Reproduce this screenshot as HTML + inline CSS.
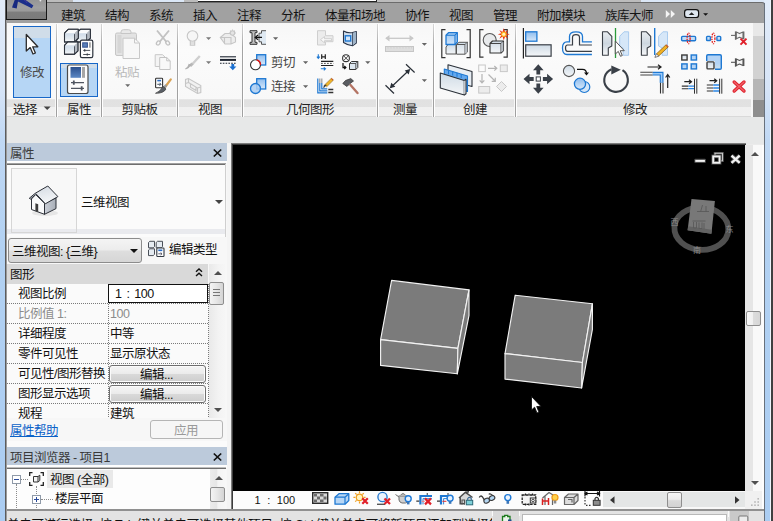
<!DOCTYPE html>
<html lang="zh-CN">
<head>
<meta charset="utf-8">
<title>Revit</title>
<style>
html,body{margin:0;padding:0;}
body{width:773px;height:521px;overflow:hidden;position:relative;background:#ebebeb;
  font-family:"Liberation Sans","Noto Sans CJK SC",sans-serif;font-size:12.5px;letter-spacing:-0.5px;color:#1a1a1a;}
.a{position:absolute;}
.t{position:absolute;white-space:nowrap;line-height:16px;height:16px;margin-top:2px;}
svg{position:absolute;overflow:visible;}
/* window frame */
#lb{left:0;top:0;width:5px;height:521px;background:linear-gradient(#e2ecf9 0,#d6e4f7 90px,#c0d8f4 140px,#b2d1f2 250px,#abcdf2 521px);}
#ll{left:5px;top:0;width:1px;height:521px;background:#5c5c5c;}
#rb{left:766px;top:0;width:7px;height:521px;background:linear-gradient(90deg,#c4daf4,#b7d0ee 50%,#cadef6);}
#rl{left:764px;top:0;width:2px;height:521px;background:#8e8e8e;}
/* tab bar */
#tabbar{left:6px;top:0;width:758px;height:23px;background:#a1a1a1;}
.tab{position:absolute;top:8px;line-height:16px;color:#141414;white-space:nowrap;}
/* ribbon */
#ribbon{left:6px;top:23px;width:758px;height:94px;background:linear-gradient(#f7f7f7,#fbfbfb 30%,#f7f7f7);}
.plabel{position:absolute;top:99px;height:18px;background:linear-gradient(#ececec 0,#e1e1e1 1px,#e2e2e2 8.500px,#f0f0f0 8.500px,#f1f1f1 17px,#d9d9d9 17px);}
.pl{position:absolute;top:102px;line-height:16px;text-align:center;color:#222;white-space:nowrap;}
.sep{position:absolute;top:24px;width:1px;height:93px;background:linear-gradient(#d8d8d8,#a4a4a4 25%,#a0a0a0);}
.sepw{position:absolute;top:24px;width:1px;height:93px;background:#fff;}
/* palettes */
.btn{box-sizing:border-box;border:1px solid #6f6f6f;border-radius:3px;background:linear-gradient(#f5f5f5,#ebebeb 48%,#d9d9d9 52%,#cdcdcd);box-shadow:inset 0 0 0 1px #fafafa;}
.ptitle{position:absolute;left:6px;width:221px;background:#bccadb;color:#1e1e1e;}
</style>
</head>
<body>
<!-- frame -->
<div class="a" id="lb"></div><div class="a" id="ll"></div>
<div class="a" style="left:764px;top:0;width:9px;height:521px;background:linear-gradient(#e2ecf9 0,#d6e4f7 90px,#c0d8f4 140px,#b2d1f2 250px,#abcdf2 521px)"></div>
<div class="a" style="left:764px;top:3px;width:1px;height:518px;background:#68717c"></div>
<div class="a" style="left:770px;top:0;width:1px;height:521px;background:#eef4fb"></div>
<div class="a" style="left:771px;top:0;width:2px;height:521px;background:#404040"></div>

<!-- tab bar -->
<div class="a" style="left:6px;top:0;width:758px;height:3px;background:#dbe7f6"></div>
<div class="a" style="left:47px;top:0;width:26px;height:2px;background:#bcbcbc"></div>
<div class="a" style="left:184px;top:0;width:14px;height:2px;background:#bcbcbc"></div>
<div class="a" style="left:198px;top:0;width:179px;height:2px;background:#fdfdfd;border-bottom:1px solid #222;border-right:1px solid #222;box-sizing:border-box"></div>
<div class="a" style="left:377px;top:0;width:264px;height:2px;background:#bcbcbc"></div>
<div class="a" id="tabbar" style="top:2px;height:21px;width:759px;box-sizing:border-box;border-top:1px solid #6c6c6c;border-right:1px solid #68717c;border-top-right-radius:3px"></div>
<div class="a" id="appbtn" style="left:6px;top:0;width:41px;height:20px;background:linear-gradient(#969696,#a0a0a0 40%,#9a9a9a 58%,#7e7e7e 64%,#7a7a7a);border:1px solid #161616;border-top:none;box-sizing:border-box;overflow:hidden"><svg style="left:0;top:0" width="40" height="19" viewBox="0 0 40 19"><path d="M7.700 0 H11.200 L9.700 8.500 L5 7.400Z" fill="#182a80"/><path d="M11.200 0 H18.600 L26.400 5.400 L24.800 8.200 L10.900 1.600Z" fill="#1b2f8a"/><path d="M17 0 q2.500 1 3 3" stroke="#4a3aa0" stroke-width="0.800" fill="none"/><circle cx="33.400" cy="0.500" r="0.900" fill="#e8e8e8"/></svg></div>
<svg style="left:0;top:0" width="773" height="24" viewBox="0 0 773 24">
<path d="M665.800 10 v8 l4.200 -4z M670.800 10 v8 l4.200 -4z" fill="#f4f4f4"/>
<rect x="684.600" y="9.700" width="14" height="7.800" rx="2.600" fill="#dfe7f0" stroke="#111" stroke-width="1.200"/>
<path d="M688.800 15 h5.600 l-2.800 -2.800z" fill="#222"/>
<path d="M703.100 13.200 h5 l-2.500 2.600z" fill="#111"/>
</svg>
<span class="tab" style="left:61px">建筑</span>
<span class="tab" style="left:105px">结构</span>
<span class="tab" style="left:149px">系统</span>
<span class="tab" style="left:193px">插入</span>
<span class="tab" style="left:237px">注释</span>
<span class="tab" style="left:281px">分析</span>
<span class="tab" style="left:325px">体量和场地</span>
<span class="tab" style="left:405px">协作</span>
<span class="tab" style="left:449px">视图</span>
<span class="tab" style="left:493px">管理</span>
<span class="tab" style="left:537px">附加模块</span>
<span class="tab" style="left:605px">族库大师</span>

<!-- ribbon -->
<div class="a" id="ribbon"></div>
<div class="plabel" style="left:7px;width:48px"></div>
<span class="pl" style="left:13px">选择</span>
<div class="sep" style="left:56px"></div><div class="sepw" style="left:57px"></div>
<div class="plabel" style="left:58px;width:42px"></div>
<span class="pl" style="left:67px">属性</span>
<div class="sep" style="left:101px"></div><div class="sepw" style="left:102px"></div>
<div class="plabel" style="left:103px;width:73px"></div>
<span class="pl" style="left:121.5px">剪贴板</span>
<div class="sep" style="left:177px"></div><div class="sepw" style="left:178px"></div>
<div class="plabel" style="left:179px;width:62px"></div>
<span class="pl" style="left:198px">视图</span>
<div class="sep" style="left:242px"></div><div class="sepw" style="left:243px"></div>
<div class="plabel" style="left:244px;width:132px"></div>
<span class="pl" style="left:286px">几何图形</span>
<div class="sep" style="left:377px"></div><div class="sepw" style="left:378px"></div>
<div class="plabel" style="left:379px;width:53px"></div>
<span class="pl" style="left:393px">测量</span>
<div class="sep" style="left:433px"></div><div class="sepw" style="left:434px"></div>
<div class="plabel" style="left:435px;width:79px"></div>
<span class="pl" style="left:463px">创建</span>
<div class="sep" style="left:515px"></div><div class="sepw" style="left:516px"></div>
<div class="plabel" style="left:517px;width:234px"></div>
<span class="pl" style="left:623px">修改</span>

<!-- select / properties panel -->
<div class="a" style="left:13px;top:26px;width:38px;height:72px;box-sizing:border-box;border:1px solid #1767c8;background:linear-gradient(#d0dde9,#d0dde9 11px,#b6d6f5 11px,#b6d6f5)"></div>
<span class="t" style="left:20px;top:63px;color:#4a4a4a">修改</span>
<div class="a" style="left:60px;top:63px;width:38px;height:34px;box-sizing:border-box;border:1px solid #1767c8;background:linear-gradient(#d0dde9,#d0dde9 4px,#b6d6f5 4px,#b6d6f5)"></div>
<svg style="left:0;top:0" width="773" height="130" viewBox="0 0 773 130">
<!-- arrow cursor -->
<path d="M26.300 34.500 V51 L30.200 47.600 L33 54 L35.400 53 L32.700 46.800 H37.800 Z" fill="#fff" stroke="#2c2c2c" stroke-width="1.300" stroke-linejoin="round"/>
<!-- select dropdown arrow -->
<path d="M43.700 106.500 h7 l-3.500 3.500z" fill="#444"/>
<!-- type properties -->
<defs><linearGradient id="gtp" x1="0" y1="0" x2="0" y2="1"><stop offset="0" stop-color="#fafbfc"/><stop offset="0.400" stop-color="#d3deea"/><stop offset="0.750" stop-color="#e3eaf0"/><stop offset="1" stop-color="#fbfbfc"/></linearGradient></defs>
<g stroke="#2c323c" stroke-width="1.050" stroke-linejoin="round">
<path d="M76.6 33.1 L80.39999999999999 29.3 H90.39999999999999 V38.10000000000001 L86.6 41.900000000000006 H76.6Z" fill="url(#gtp)"/><path d="M86.6 33.1 L90.39999999999999 29.3 V38.10000000000001 L86.6 41.900000000000006Z" fill="#b4bac2" stroke="none"/><path d="M77.1 32.9 L80.39999999999999 29.8 H89.89999999999999 L86.6 32.9Z" fill="#fafbfc" stroke="none"/><path d="M86.6 34.1 V41.900000000000006" fill="none" stroke-width="0.800"/><path d="M76.6 33.1 L80.39999999999999 29.3 H90.39999999999999 V38.10000000000001 L86.6 41.900000000000006 H76.6Z" fill="none"/><path d="M64.5 33.1 L68.3 29.3 H78.3 V38.10000000000001 L74.5 41.900000000000006 H64.5Z" fill="url(#gtp)"/><path d="M74.5 33.1 L78.3 29.3 V38.10000000000001 L74.5 41.900000000000006Z" fill="#b4bac2" stroke="none"/><path d="M65.0 32.9 L68.3 29.8 H77.8 L74.5 32.9Z" fill="#fafbfc" stroke="none"/><path d="M74.5 34.1 V41.900000000000006" fill="none" stroke-width="0.800"/><path d="M64.5 33.1 L68.3 29.3 H78.3 V38.10000000000001 L74.5 41.900000000000006 H64.5Z" fill="none"/><path d="M64.5 45.3 L67.9 41.9 H77.9 V50.8 L74.5 54.199999999999996 H64.5Z" fill="url(#gtp)"/><path d="M74.5 45.3 L77.9 41.9 V50.8 L74.5 54.199999999999996Z" fill="#b4bac2" stroke="none"/><path d="M65.0 45.099999999999994 L67.9 42.4 H77.4 L74.5 45.099999999999994Z" fill="#fafbfc" stroke="none"/><path d="M74.5 46.3 V54.199999999999996" fill="none" stroke-width="0.800"/><path d="M64.5 45.3 L67.9 41.9 H77.9 V50.8 L74.5 54.199999999999996 H64.5Z" fill="none"/>
</g>
<rect x="80.400" y="40.200" width="12.400" height="17.500" rx="1.600" fill="#fdfdfd" stroke="#2c323c" stroke-width="1.200"/>
<rect x="82.200" y="42.300" width="5.700" height="5.400" fill="#2c4c8c"/>
<rect x="83.200" y="43.300" width="3.700" height="3.400" fill="#5a7fb8"/>
<rect x="89" y="42.300" width="1.800" height="5.400" fill="#a4a4a4"/>
<path d="M83.200 50.400 h7 M83.200 54.500 h7" stroke="#3a4048" stroke-width="0.900"/>
<path d="M84.700 49.300 v2.200 M87.300 53.400 v2.200" stroke="#3a4048" stroke-width="1.300"/>
<!-- properties -->
<rect x="67.500" y="65" width="20.500" height="28.500" rx="2" fill="#fcfcfc" stroke="#4a4a4a" stroke-width="1.200"/>
<rect x="70.500" y="67" width="10.500" height="10.800" fill="url(#gblue)"/>
<rect x="82" y="67" width="3" height="10.800" fill="#a6a6a6"/>
<path d="M71 82.600 h13 M71 88.300 h13" stroke="#4f5560" stroke-width="1.200"/>
<path d="M73.800 80.500 v4.200 M81.700 86.200 v4.200" stroke="#4f5560" stroke-width="1.800"/>
<defs><linearGradient id="gblue" x1="0" y1="0" x2="0" y2="1"><stop offset="0" stop-color="#2b4f8c"/><stop offset="1" stop-color="#5d88c4"/></linearGradient></defs>
</svg>

<!-- clipboard panel -->
<span class="t" style="left:115px;top:63px;color:#b9b9b9">粘贴</span>
<svg style="left:0;top:0" width="773" height="130" viewBox="0 0 773 130">
<!-- paste (disabled) -->
<rect x="115.500" y="33" width="21" height="22.500" rx="1.500" fill="#e3e3e3" stroke="#c6c6c6" stroke-width="1"/>
<path d="M121 33.500 v-1.500 q0 -2.300 2.500 -2.300 h5 q2.500 0 2.500 2.300 v1.500z" fill="#e9e9e9" stroke="#c6c6c6" stroke-width="1"/>
<rect x="117.500" y="35" width="4" height="18" fill="#d6d6d6"/>
<path d="M123 38.200 H134.500 L139.500 43 V58.500 H123Z" fill="#f7f7f7" stroke="#c8c8c8" stroke-width="1" stroke-linejoin="round"/>
<path d="M134.500 38.200 V43 H139.500" fill="none" stroke="#c8c8c8" stroke-width="1"/>
<path d="M125.200 84.300 h5 l-2.500 2.600z" fill="#6a6a6a"/>
<!-- cut (disabled) -->
<g fill="none" stroke="#c2c2c2" stroke-width="1.300">
<path d="M157 30.500 L166.500 42 M169 30.500 L159.500 42" stroke-width="1.900"/>
<ellipse cx="158.300" cy="43" rx="1.700" ry="2.200" transform="rotate(35 158.300 43)"/>
<ellipse cx="167.700" cy="43" rx="1.700" ry="2.200" transform="rotate(-35 167.700 43)"/>
</g>
<!-- copy (disabled) -->
<path d="M155.200 54.700 H162.500 L165 57 V66.500 H155.200Z" fill="#f4f4f4" stroke="#c8c8c8" stroke-width="1"/>
<path d="M159.700 57.500 H166.700 L170.200 60.800 V69.500 H159.700Z" fill="#f8f8f8" stroke="#c4c4c4" stroke-width="1" stroke-linejoin="round"/>
<path d="M166.700 57.500 V60.800 H170.200" fill="none" stroke="#c4c4c4" stroke-width="1"/>
<!-- match type -->
<rect x="155.600" y="78.300" width="7" height="9.500" rx="0.800" fill="#fff" stroke="#333" stroke-width="1.100"/>
<rect x="157.300" y="79.800" width="3.800" height="1.600" fill="#2f6fc4"/>
<path d="M157.300 84.300 h3.500 M159.500 82.800 l1.500 1.500 l-1.500 1.500" fill="none" stroke="#345" stroke-width="0.900"/>
<path d="M170.800 79.300 L165.500 86.500" stroke="#d9a254" stroke-width="2.200" stroke-linecap="round"/>
<path d="M166.300 85 L164 88" stroke="#9a9a9a" stroke-width="2.600"/>
<path d="M163 86.300 L166 89 Q163.500 93.500 155.500 93.300 Q160.500 91.500 163 86.300Z" fill="#5a5f66" stroke="#3c3c3c" stroke-width="0.700"/>
</svg>

<!-- view panel -->
<svg style="left:0;top:0" width="773" height="130" viewBox="0 0 773 130">
<g fill="none" stroke="#c6c6c6" stroke-width="1.100">
<!-- bulb -->
<circle cx="192.500" cy="36" r="5.300" fill="#f6f6f6"/>
<path d="M190.300 40.800 v4.300 h4.400 v-4.300 M190.300 43 h4.400" />
<!-- render box -->
<path d="M220.300 37.500 L225 33.500 H231 L235.500 37.500 V42 L231 44 H225Z M224.500 37.500 h6.500 v6.500 M220.300 37.500 L224.500 37.500 V44" fill="#ededed"/>
<circle cx="232.500" cy="33" r="2.200" fill="#e4e4e4"/>
<path d="M232.500 29.500 v1 M235.800 33 h-1 M234.900 30.600 l-0.700 0.700 M230.100 30.600 l0.700 0.700 M229.200 33 h1"/>
<!-- brush -->
<path d="M199.800 56 L192 64.500" stroke-width="2.400" stroke="#cfcfcf"/>
<path d="M192.500 63.500 L190 66" stroke-width="3" stroke="#b9b9b9"/>
<path d="M190.500 65 Q188.500 68.500 185.500 69 Q188.500 67 189 64.500Z" fill="#b0b0b0" stroke="#b0b0b0"/>
<!-- cut profile -->
<path d="M185.500 82.500 V79.500 L188.500 78.500 L200.800 85.500 V92.500 L197.500 93.500 L185.500 86.500Z" fill="#f1f1f1"/>
<path d="M188.500 78.500 V82.500 L197.500 88 V93.500 M188.500 82.500 L185.500 83.500 M197.500 88 L200.800 87 M190.500 83.700 v3.500 L196 90.500 v-3.300" />
</g>
<path d="M206 37.200 h5.200 l-2.600 2.800z M206 61.300 h5.200 l-2.600 2.800z" fill="#7c7c7c"/>
<!-- thin lines -->
<path d="M220 56.800 h16" stroke="#1d2430" stroke-width="1.100"/>
<path d="M220 59.900 h16" stroke="#1d2430" stroke-width="2"/>
<path d="M220 63.300 h16" stroke="#1d2430" stroke-width="1.100" stroke-dasharray="1.600 1.200"/>
<path d="M231.400 64 h2.800 v2.600 h2.200 l-3.600 3.600 l-3.600 -3.600 h2.200z" fill="#1a6fd0"/>
</svg>

<!-- geometry panel -->
<span class="t" style="left:271px;top:53px;color:#444">剪切</span>
<span class="t" style="left:271px;top:77px;color:#444">连接</span>
<svg style="left:0;top:0" width="773" height="130" viewBox="0 0 773 130">
<defs><linearGradient id="gsq" x1="0" y1="0" x2="0" y2="1"><stop offset="0" stop-color="#8fbdee"/><stop offset="1" stop-color="#d7e8f9"/></linearGradient></defs>
<!-- cope -->
<path d="M250 30.700 h7 v2 h-2 v9.600 h2 v2 h-7 v-2 h2 v-9.600 h-2z" fill="#c4c4c4" stroke="#333" stroke-width="1"/>
<path d="M266 30.700 h-4.500 v2.500 h-2.500 v8.600 h2.500 v2.500 h4.500z" fill="#dfe9f2" stroke="none"/>
<path d="M266 30.700 h-4.500 v2.500 h-2.500 v8.600 h2.500 v2.500 h4.500" fill="none" stroke="#555" stroke-width="1"/>
<path d="M262 37.400 h-6.500 M258 35 l-2.800 2.400 l2.800 2.400" fill="none" stroke="#111" stroke-width="1.200"/>
<path d="M273 37.200 h5.200 l-2.600 2.800z M303 61.300 h5.200 l-2.600 2.800z M303 85.300 h5.200 l-2.600 2.800z M365.200 61.300 h5.200 l-2.600 2.800z" fill="#666"/>
<!-- cut geometry -->
<rect x="256.700" y="54.700" width="9" height="10.300" fill="url(#gsq)" stroke="#1e78d2" stroke-width="1.300"/>
<circle cx="255.500" cy="64.800" r="5" fill="#fff" stroke="#333" stroke-width="1.100"/>
<path d="M256.700 59.950 A5 5 0 0 1 260.500 65" fill="none" stroke="#e01818" stroke-width="1.400"/>
<!-- join geometry -->
<rect x="256.700" y="78.700" width="9" height="10.300" fill="url(#gsq)" stroke="#1e78d2" stroke-width="1.300"/>
<circle cx="255.500" cy="88.500" r="5" fill="#a9cdf2" fill-opacity="0.85" stroke="#1e78d2" stroke-width="1.300"/>
<!-- split face (disabled) -->
<path d="M317.500 30.700 h8 v5 h7.500 v6 h-7.500 v3.300 h-8z" fill="#ececec" stroke="#cfcfcf" stroke-width="1"/>
<path d="M331.500 38.700 h-7 v-2.200 l-4 3.200 l4 3.200 v-2.200 h7z" fill="#f8f8f8" stroke="#cdcdcd" stroke-width="0.900"/>
<!-- wall opening -->
<path d="M343.500 31 Q348 33.500 352.500 32.500 L356.300 31.500 V43 L352.500 45.800 Q347 45 343.500 42.500Z" fill="#cfdeee" stroke="#2a3448" stroke-width="1.100" stroke-linejoin="round"/>
<path d="M352.500 32.500 V45.800" stroke="#2a3448" stroke-width="0.900"/>
<path d="M352.800 33 l3.200 -1 v10.800 l-3.200 2.400z" fill="#9fb4c8"/>
<rect x="345.300" y="35.800" width="5.400" height="5.200" fill="#d4e6fa" stroke="#1e78d2" stroke-width="1.400"/>
<!-- beam/column joins -->
<path d="M318.300 54.300 v4 M316.900 56.700 l1.400 1.700 l1.400 -1.700" fill="none" stroke="#1e78d2" stroke-width="1.100"/>
<path d="M321.700 54.300 v4.600 M325.300 54.300 v4.600 M321.700 56.800 h3.600" fill="none" stroke="#222" stroke-width="1.200"/>
<path d="M321 61.300 h12.300 M321 65.500 h12.300" stroke="#222" stroke-width="1.200"/>
<path d="M321 63.400 h12.300" stroke="#444" stroke-width="0.900" stroke-dasharray="1.800 1.200"/>
<path d="M320.800 68.800 h4.600 M323.800 67.300 l1.700 1.500 l-1.700 1.500" fill="none" stroke="#1e78d2" stroke-width="1.100"/>
<!-- uncut -->
<circle cx="346" cy="58.200" r="3.400" fill="#fff" stroke="#333" stroke-width="1.100"/>
<path d="M343.700 55.900 l4.600 4.600 M348.300 55.900 l-4.600 4.600" stroke="#333" stroke-width="0.900"/>
<path d="M343 63 v4.600 h2.600 M344.300 66 l1.600 1.600 l-1.600 1.600" fill="none" stroke="#111" stroke-width="1.200"/>
<path d="M349.500 63.500 L351.500 61.500 H357.800 V67.500 L355.800 69.500 H349.500Z" fill="#dde7f0" stroke="#333" stroke-width="1" stroke-linejoin="round"/>
<path d="M349.500 63.500 H355.800 V69.500 M355.800 63.500 L357.800 61.500" fill="none" stroke="#333" stroke-width="0.800"/>
<!-- wall joins -->
<path d="M317.800 78.500 v14.400 h9.500 M319.800 83 v7.800 h7.500 M321.800 83 v5.800 h5.500" fill="none" stroke="#1e78d2" stroke-width="1.200"/>
<path d="M319.800 78.500 v4.500 M321.800 78.500 v4.500" stroke="#9a9a9a" stroke-width="1.200"/>
<path d="M328.300 89.500 h5 M328.300 92.500 h5" stroke="#333" stroke-width="1.300"/>
<path d="M332.300 79.300 L325.500 86" stroke="#f0b428" stroke-width="2.600"/>
<path d="M333.300 80.300 L331.300 78.300" stroke="#c05a28" stroke-width="1.200"/>
<path d="M326.300 85 L323.800 87.600 L324.300 85.300Z" fill="#333" stroke="#333" stroke-width="0.800"/>
<path d="M331.300 78.300 L324.500 85 M333.300 80.300 L326.500 87" stroke="#7a5a1a" stroke-width="0.500"/>
<!-- demolish hammer -->
<path d="M350.500 85 L357.500 93" stroke="#b47464" stroke-width="2.400" stroke-linecap="round"/>
<path d="M342.800 83.500 L345.500 80.500 L350.800 78.600 L353.500 81 L350 83.500 L347 86.500Z" fill="#5a5d62" stroke="#3a3a3a" stroke-width="0.800" stroke-linejoin="round"/>
</svg>

<!-- measure + create panels -->
<svg style="left:0;top:0" width="773" height="130" viewBox="0 0 773 130">
<defs><linearGradient id="gcube" x1="0" y1="0" x2="0" y2="1"><stop offset="0" stop-color="#cfdbe6"/><stop offset="1" stop-color="#f4f6f8"/></linearGradient>
<linearGradient id="gcubeb" x1="0" y1="0" x2="0" y2="1"><stop offset="0" stop-color="#9ec8f2"/><stop offset="1" stop-color="#cfe3f8"/></linearGradient></defs>
<!-- measure disabled -->
<path d="M386 38.300 h27" stroke="#c8c8c8" stroke-width="1.300"/>
<path d="M389.500 35 l-4.300 3.300 l4.300 3.300z M409.500 35 l4.300 3.300 l-4.300 3.300z" fill="#c8c8c8"/>
<rect x="385.500" y="46.500" width="28" height="5" fill="#dedede" stroke="#c6c6c6" stroke-width="1"/>
<path d="M388 46.500 v2 M391 46.500 v2 M394 46.500 v2 M397 46.500 v2 M400 46.500 v2 M403 46.500 v2 M406 46.500 v2 M409 46.500 v2 M411.500 46.500 v2" stroke="#cdcdcd" stroke-width="0.700"/>
<path d="M421.800 43 h5.200 l-2.600 2.800z M421.800 79.200 h5.200 l-2.600 2.800z" fill="#666"/>
<!-- aligned dimension -->
<path d="M385.500 85.300 L394 93.500 M406 64.300 L414.600 72.500 M391 87.200 L409 70.200" stroke="#2a3038" stroke-width="1.200" fill="none"/>
<path d="M389.800 88.300 L391.300 82.800 L395.300 86.800Z M410.200 69.100 L408.700 74.600 L404.700 70.600Z" fill="#2a3038"/>
<!-- create assembly -->
<g fill="none" stroke="#333" stroke-width="1.200"><path d="M445.500 29.700 h-3.700 v28 h3.700 M466.500 29.700 h3.700 v28 h-3.700 M483.500 29.700 h-3.700 v27.500 h3.700 M503.500 29.700 h3.700 v27.500 h-3.700"/></g>
<g stroke="#555" stroke-width="1" stroke-linejoin="round">
<path d="M446 47 L448 44.500 H456 V54 H446Z" fill="url(#gcube)"/>
<path d="M456.500 44.500 L459 42.300 H467.500 V52 L465 54.200 H456.500Z" fill="url(#gcube)"/>
<path d="M456.500 44.500 H465 V54.200 M465 44.500 L467.500 42.300" fill="none"/>
<path d="M465.300 44.700 l2 -1.900 v9 l-2 1.900z" fill="#b9bfc6" stroke="none"/>
</g>
<path d="M446 35.200 L448.500 32.700 H457.300 V42 L455 44.500 H446Z" fill="url(#gcubeb)" stroke="#1e78d2" stroke-width="1.300" stroke-linejoin="round"/>
<path d="M446 35.200 H455 V44.500 M455 35.200 L457.300 32.700" fill="none" stroke="#1e78d2" stroke-width="1.100"/>
<!-- create parts -->
<circle cx="489.700" cy="40" r="6.500" fill="#e8eaec" stroke="#555" stroke-width="1.100"/>
<path d="M490 43.500 L492.500 41 H503.500 V50.500 L501 53 H490Z" fill="url(#gcube)" stroke="#333" stroke-width="1.100" stroke-linejoin="round"/>
<path d="M490 43.500 H501 V53 M501 43.500 L503.500 41" fill="none" stroke="#333" stroke-width="0.900"/>
<path d="M501.300 43.700 l2 -2 v8.700 l-2 2z" fill="#b9bfc6"/>
<g transform="translate(503.800 34.300)">
<path d="M0 -6 L1.300 -2.200 L4.400 -4.400 L2.500 -1 L6 0 L2.500 1 L4.400 4.400 L1.300 2.200 L0 6 L-1.300 2.200 L-4.400 4.400 L-2.500 1 L-6 0 L-2.500 -1 L-4.400 -4.400 L-1.300 -2.200Z" fill="#e83010"/>
<circle r="2.700" fill="#ffb020"/><circle r="1.500" fill="#fff6c0"/>
</g>
<!-- create group (walls) -->
<g stroke="#2a3038" stroke-width="1.100" stroke-linejoin="round">
<path d="M448 64.700 L472 71.500 V86.500 L448 80Z" fill="#e7edf3"/>
<path d="M444.300 69 L467.500 76 V91.500 L444.300 85Z" fill="#63a8ee" stroke="#1e78d2"/>
<path d="M440.300 73 L464.300 80.500 V95 L440.300 88Z" fill="url(#gcube)"/>
<path d="M464.300 80.500 L466 79.300 V93.800 L464.300 95" fill="#fff"/>
</g>
<path d="M448.500 70.300 v4 M452.700 71.500 v4 M457 72.800 v4 M461.200 74 v4" stroke="#1e78d2" stroke-width="1"/>
<!-- similar (disabled) -->
<g fill="#ececec" stroke="#c8c8c8" stroke-width="1">
<rect x="478.700" y="65" width="6.600" height="6.600" fill="#fbfbfb"/>
<rect x="500.300" y="65" width="7" height="6.600"/>
<rect x="478.700" y="86.500" width="11" height="6.600"/>
<path d="M501.500 81.500 L506.500 86.500 L501.500 91.500 L496.500 86.500Z"/>
</g>
<g fill="none" stroke="#b4b4b4" stroke-width="1.200">
<path d="M488 68.300 h8.500 M494.300 66 l2.500 2.300 l-2.500 2.300"/>
<path d="M482 74 v8.500 M479.700 80.300 l2.300 2.500 l2.300 -2.500"/>
<path d="M488.500 74.500 l6.500 6.500 M495.300 77.700 v3.600 h-3.600"/>
</g>
</svg>

<!-- modify panel -->
<svg style="left:0;top:0" width="773" height="130" viewBox="0 0 773 130">
<defs><linearGradient id="ggr" x1="0" y1="0" x2="0" y2="1"><stop offset="0" stop-color="#e9edf0"/><stop offset="0.5" stop-color="#cdd7e0"/><stop offset="1" stop-color="#f6f7f8"/></linearGradient></defs>
<!-- align -->
<path d="M523.400 28 v30.500" stroke="#222" stroke-width="1.200"/>
<rect x="525.700" y="31.800" width="11.200" height="9.400" fill="url(#gsq)" stroke="#1e78d2" stroke-width="1.300"/>
<rect x="525.700" y="44.800" width="25.400" height="11.400" fill="url(#gcube)" stroke="#3a3f46" stroke-width="1.200"/>
<!-- offset -->
<path d="M591.900 41.800 H582.500 V36.500 Q582.500 31.800 576 31.800 Q569.500 31.800 569.500 36.500 V41.800 H567 Q562.500 41.800 562.500 48 Q562.500 54.500 567 54.500 H591.900" fill="none" stroke="#1e78d2" stroke-width="1.300"/>
<path d="M591.900 45 H579.500 V37.500 Q579.500 34.700 576 34.700 Q572.500 34.700 572.500 37.500 V45 H567.500 Q565.500 45 565.500 48 Q565.500 51.300 567.500 51.300 H591.900" fill="none" stroke="#3a3f46" stroke-width="1.200"/>
<!-- move -->
<g fill="#3a4048"><path d="M538.300 64.300 l5.300 6 h-3.400 v4.200 h-3.800 v-4.200 h-3.400z M538.300 93.700 l5.300 -6 h-3.400 v-4.200 h-3.800 v4.200 h-3.400z M523.500 79 l6 -5.300 v3.400 h4.200 v3.800 h-4.200 v3.400z M553.100 79 l-6 -5.300 v3.400 h-4.200 v3.800 h4.200 v3.400z"/></g>
<rect x="536.200" y="76.900" width="4.200" height="4.200" fill="#fff" stroke="#3a4048" stroke-width="1"/>
<!-- copy -->
<circle cx="569" cy="71" r="5.600" fill="url(#gcube)" stroke="#555" stroke-width="1.100"/>
<path d="M577 69.300 h5.500 q4 0 4 4.500" fill="none" stroke="#111" stroke-width="1.200"/>
<path d="M584 72.500 h5 l-2.500 3z" fill="#111"/>
<circle cx="584.300" cy="87" r="5.500" fill="#d4e6f8" stroke="#1e78d2" stroke-width="1.200"/>
<circle cx="580" cy="83.800" r="5.600" fill="url(#gsq)" stroke="#1e78d2" stroke-width="1.300"/>
<!-- mirror pick axis -->
<path d="M602.500 31.800 H607.500 L611.800 36.300 V46 L608.300 48 V55.300 H602.500Z" fill="url(#ggr)" stroke="#3a3f46" stroke-width="1.100" stroke-linejoin="round"/>
<path d="M628.600 31.800 H624 L619.700 36.300 V46 L623.200 48 V55.300 H628.600Z" fill="#d6e7f8" stroke="#a9cbee" stroke-width="1" stroke-linejoin="round"/>
<path d="M615.500 28 v30" stroke="#2a9a3a" stroke-width="1.300"/>
<path d="M615.300 41 V54 L618.300 51.400 L620.500 56.300 L622.300 55.500 L620.200 50.700 H624.300 Z" fill="#fff" stroke="#555" stroke-width="1" stroke-linejoin="round"/>
<!-- mirror draw axis -->
<path d="M641.400 31.800 H646.400 L650.700 36.300 V46 L647.200 48 V55.300 H641.400Z" fill="url(#ggr)" stroke="#3a3f46" stroke-width="1.100" stroke-linejoin="round"/>
<path d="M667.500 31.800 H662.900 L658.600 36.300 V46 L662.100 48 V55.300 H667.500Z" fill="#d6e7f8" stroke="#a9cbee" stroke-width="1" stroke-linejoin="round"/>
<path d="M654.700 28 v27" stroke="#1e78d2" stroke-width="1.400"/>
<path d="M667 46 L657.500 55" stroke="#f2b224" stroke-width="3.200"/>
<path d="M668.200 47.200 L666 44.900" stroke="#c86030" stroke-width="1.600"/>
<path d="M665.900 44.900 L656.400 53.900 M668.100 47.100 L658.600 56.100" stroke="#6a4a12" stroke-width="0.600"/>
<path d="M656.400 53.700 L654.900 57.400 L658.800 56.200Z" fill="#fff" stroke="#444" stroke-width="0.700"/>
<!-- rotate -->
<path d="M611.500 69.200 A11.800 11.800 0 1 0 622.500 70.200" fill="none" stroke="#3a4048" stroke-width="2.100"/>
<path d="M611.300 65.500 L620.800 69.800 L611.300 74.500Z" fill="#3a4048"/>
<!-- trim/extend to corner -->
<path d="M647.500 67 h13 M658 64.800 l3 2.200 l-3 2.200" fill="none" stroke="#222" stroke-width="1.200"/>
<path d="M640.300 72.300 h12.500 M640.300 75 h12.500" stroke="#444" stroke-width="1.100"/>
<path d="M652.800 73.700 h8.800 v9" fill="none" stroke="#1e78d2" stroke-width="3.800"/>
<path d="M652.800 73.700 h8.800 v9" fill="none" stroke="#9ccaf8" stroke-width="1.600"/>
<path d="M660.500 82.700 v10.800 M663 82.700 v10.800" stroke="#333" stroke-width="1.100"/>
<path d="M667.700 88 v-13 M665.600 77.500 l2.100 -3 l2.100 3" fill="none" stroke="#222" stroke-width="1.200"/>
<!-- split -->
<rect x="681.600" y="36.400" width="14" height="4.300" rx="1" fill="#c4ddf6" stroke="#1e78d2" stroke-width="1.400"/>
<ellipse cx="688.600" cy="38.400" rx="1.500" ry="5.300" fill="none" stroke="#e01818" stroke-width="1.300" stroke-dasharray="1.400 1"/>
<!-- split with gap -->
<rect x="706.600" y="36.400" width="3.800" height="4.100" rx="0.800" fill="#c4ddf6" stroke="#1e78d2" stroke-width="1.400"/>
<rect x="716.900" y="36.400" width="3.800" height="4.100" rx="0.800" fill="#c4ddf6" stroke="#1e78d2" stroke-width="1.400"/>
<ellipse cx="713.400" cy="38.400" rx="1.500" ry="5.300" fill="none" stroke="#e01818" stroke-width="1.300" stroke-dasharray="1.400 1"/>
<!-- unpin -->
<g fill="#f4f4f4" stroke="#6a6a6a" stroke-width="1.100" stroke-linejoin="round"><path d="M731 35.4 h4.500" fill="none"/><path d="M735.600 31.4 v8.400" fill="none" stroke-width="1.400"/><path d="M736.300 32.1 L739.500 33.6 L743 32.1 V38.699999999999996 L739.500 37.199999999999996 L736.300 38.699999999999996Z"/><path d="M743.700 31.599999999999998 v7.600" fill="none" stroke-width="1.400"/></g>
<path d="M740.500 38.600 l6 6 M746.500 38.600 l-6 6" stroke="#e0202a" stroke-width="2"/>
<!-- array -->
<rect x="681.800" y="55" width="5.300" height="5" fill="url(#gcube)" stroke="#3c3c3c" stroke-width="1.400"/>
<rect x="691.200" y="55" width="5.300" height="5" fill="url(#gsq2)" stroke="#1e78d2" stroke-width="1.400"/>
<rect x="681.800" y="63.900" width="5.300" height="5" fill="url(#gsq2)" stroke="#1e78d2" stroke-width="1.400"/>
<rect x="691.200" y="63.900" width="5.300" height="5" fill="url(#gsq2)" stroke="#1e78d2" stroke-width="1.400"/>
<defs><linearGradient id="gsq2" x1="0" y1="0" x2="0" y2="1"><stop offset="0" stop-color="#b3d3f5"/><stop offset="0.600" stop-color="#b3d3f5"/><stop offset="1" stop-color="#d0e2ec"/></linearGradient></defs>
<!-- scale -->
<rect x="706.700" y="54.700" width="14.600" height="14.500" rx="1.300" fill="url(#gsq2)" stroke="#1e78d2" stroke-width="1.400"/>
<rect x="705.500" y="61" width="9.500" height="9.500" fill="#f8f8f8"/>
<rect x="707" y="61.900" width="7" height="7" rx="0.800" fill="url(#gcube)" stroke="#3c3c3c" stroke-width="1.400"/>
<!-- pin -->
<g fill="#f4f4f4" stroke="#555" stroke-width="1.100" stroke-linejoin="round"><path d="M731 62.3 h4.500" fill="none"/><path d="M735.600 58.3 v8.400" fill="none" stroke-width="1.400"/><path d="M736.300 59.0 L739.500 60.5 L743 59.0 V65.6 L739.500 64.1 L736.300 65.6Z"/><path d="M743.700 58.5 v7.600" fill="none" stroke-width="1.400"/></g>
<!-- trim single -->
<path d="M684.300 81.700 h7 M689 79.700 l2.500 2 l-2.500 2" fill="none" stroke="#222" stroke-width="1.200"/>
<path d="M681.800 86.100 h6.500 M681.800 88.700 h6.500" stroke="#333" stroke-width="1.100"/>
<path d="M688.300 86.100 h6 M688.300 88.700 h6" stroke="#2a86e6" stroke-width="1.200"/>
<path d="M694.500 78.700 v15 M696.800 78.700 v15" stroke="#333" stroke-width="1"/>
<!-- trim multiple -->
<path d="M709.500 80.700 h7 M714.200 78.700 l2.500 2 l-2.500 2" fill="none" stroke="#222" stroke-width="1.200"/>
<path d="M706.800 85 h6.500 M706.800 88 h6.500 M706.800 91 h6.500" stroke="#333" stroke-width="1.100"/>
<path d="M713.300 85 h6 M713.300 88 h6 M713.300 91 h6" stroke="#2a86e6" stroke-width="1.300"/>
<path d="M719.600 78.700 v15 M721.800 78.700 v15" stroke="#333" stroke-width="1"/>
<!-- delete -->
<path d="M734.200 82 l9.800 9 M744 82 l-9.800 9" stroke="#e0242e" stroke-width="3.400" stroke-linecap="round"/>
<path d="M734.200 82 l9.800 9 M744 82 l-9.800 9" stroke="#f0606a" stroke-width="1.200" stroke-linecap="round"/>
</svg>
<!-- ribbon right strip -->
<div class="a" style="left:753px;top:23px;width:11px;height:94px;background:linear-gradient(#e8e8e8 0,#e8e8e8 13px,#d2d2d2 13px,#d2d2d2 56px,#b6b6b6 56px,#b6b6b6 77px,#8e8e8e 77px,#8e8e8e 94px)"></div>
<!--RIBBON-->

<!-- gap under ribbon -->
<div class="a" style="left:6px;top:117px;width:758px;height:27px;background:#e7e8e8"></div>


<!-- properties palette -->
<div class="a" style="left:6px;top:143px;width:226px;height:368px;background:#f7f7f7"></div>
<div class="ptitle" style="top:143px;height:18px"></div>
<span class="t" style="left:10px;top:144px;color:#3a3a3a">属性</span>
<svg style="left:213px;top:149px" width="9" height="8" viewBox="0 0 9 8"><path d="M0.8 0.5 L8.2 7.5 M8.2 0.5 L0.8 7.5" stroke="#111" stroke-width="1.7" fill="none"/></svg>
<div class="a" style="left:6px;top:161px;width:221px;height:2px;background:#fdfdfd"></div>
<div class="a" style="left:6px;top:163px;width:220px;height:1px;background:#a0a0a0"></div>
<div class="a" style="left:6px;top:164px;width:220px;height:1px;background:#6e6e6e"></div>
<div class="a" style="left:6px;top:164px;width:1px;height:73px;background:#8a8a8a"></div>
<div class="a" style="left:7px;top:165px;width:218px;height:69px;background:#fbfbfb"></div>
<div class="a" style="left:225px;top:164px;width:1px;height:73px;background:#cfcfcf"></div>
<div class="a" style="left:7px;top:229px;width:218px;height:5px;background:#e9eaee"></div>
<div class="a" style="left:7px;top:234px;width:218px;height:3px;background:#fbfbfb"></div>
<div class="a" style="left:11px;top:168px;width:66px;height:65px;box-sizing:border-box;border:1px solid #d6d6d6;background:linear-gradient(#f8f8f8,#f8f8f8 60px,#e9eaee 60px)"></div>
<svg style="left:0;top:0" width="240" height="270" viewBox="0 0 240 270">
<defs><linearGradient id="gw" x1="0" y1="0" x2="1" y2="0"><stop offset="0" stop-color="#c9ced6"/><stop offset="1" stop-color="#a9afb8"/></linearGradient>
<linearGradient id="gr" x1="0" y1="0" x2="0.300" y2="1"><stop offset="0" stop-color="#d4dae2"/><stop offset="1" stop-color="#f4f6f8"/></linearGradient></defs>
<ellipse cx="45" cy="213" rx="13" ry="3" fill="#e6e6e6"/>
<path d="M31.500 199 L35.600 194.500 L44.500 203.300 V214.300 L31.500 209.500Z" fill="#f8f9fa" stroke="#2c3038" stroke-width="1" stroke-linejoin="round"/>
<path d="M44.500 203.300 L56 198 V208.600 L44.500 214.300Z" fill="url(#gw)" stroke="#2c3038" stroke-width="1" stroke-linejoin="round"/>
<path d="M35.400 193.200 L47.800 186 L57.900 196.600 L45.400 203.800Z" fill="url(#gr)" stroke="#2c3038" stroke-width="1" stroke-linejoin="round"/>
<path d="M35.400 193.200 L29.300 198.200 L30.300 199.200 L35.600 194.700" fill="#bcc2ca" stroke="#2c3038" stroke-width="1" stroke-linejoin="round"/>
<path d="M35.400 203.300 L38.200 204.300 V212 L35.400 210.900Z" fill="#3c3c3c"/>
<!-- edit type icon -->
<g stroke="#4a4f58" stroke-width="1" stroke-linejoin="round" fill="#e6ecf2">
<path d="M148.500 242.500 l1.300 -1.200 h4.700 v5.300 l-1.300 1.200 h-4.700z"/>
<path d="M156.200 242.500 l1.300 -1.200 h5 v5.300 l-1.300 1.200 h-5z"/>
<path d="M148.500 250 l1.300 -1.200 h4.700 v5.600 l-1.300 1.200 h-4.700z"/>
</g>
<rect x="156.800" y="248" width="7.200" height="8.500" rx="0.800" fill="#fdfdfd" stroke="#333a44" stroke-width="1.100"/>
<rect x="158.300" y="249.500" width="4" height="1.600" fill="#2a6cc8"/>
<path d="M158.300 253.800 h3.600 M160.600 252.500 l1.400 1.300 l-1.400 1.300" fill="none" stroke="#445" stroke-width="0.800"/>
</svg>

<span class="t" style="left:81px;top:193px;color:#111">三维视图</span>
<svg style="left:215px;top:200px" width="8" height="4" viewBox="0 0 8 4"><path d="M0 0H8L4 4Z" fill="#444"/></svg>
<!-- type combo -->
<div class="a" style="left:8px;top:238px;width:134px;height:25px;box-sizing:border-box;border:1px solid #8c8c8c;border-radius:3px;background:linear-gradient(#f4f4f4,#ececec 48%,#dedede 52%,#d6d6d6)"></div>
<span class="t" style="left:12px;top:242px;color:#111">三维视图: {三维}</span>
<svg style="left:130px;top:249px" width="8" height="4" viewBox="0 0 8 4"><path d="M0 0H8L4 4Z" fill="#111"/></svg>

<span class="t" style="left:169px;top:240px;color:#111">编辑类型</span>
<!-- grid -->
<div class="a" style="left:6px;top:264px;width:202px;height:20px;background:#d9d9d9"></div>
<span class="t" style="left:10px;top:265px;color:#111">图形</span>
<svg style="left:195px;top:268px" width="8" height="9" viewBox="0 0 8 9"><path d="M1 3.8 L4 1 L7 3.8 M1 8 L4 5.2 L7 8" stroke="#111" stroke-width="1.4" fill="none"/></svg>
<div class="a" style="left:6px;top:284px;width:202px;height:134px;background:#fafafa"></div>
<span class="t" style="left:18px;top:284px;color:#111">视图比例</span>
<div class="a" style="left:6px;top:303px;width:202px;height:0;border-top:1px dotted #7a7a7a"></div>
<span class="t" style="left:18px;top:304px;color:#8c8c8c">比例值 1:</span>
<span class="t" style="left:110px;top:304px;color:#8c8c8c">100</span>
<div class="a" style="left:6px;top:323px;width:202px;height:0;border-top:1px dotted #7a7a7a"></div>
<span class="t" style="left:18px;top:324px;color:#111">详细程度</span>
<span class="t" style="left:110px;top:324px;color:#111">中等</span>
<div class="a" style="left:6px;top:343px;width:202px;height:0;border-top:1px dotted #7a7a7a"></div>
<span class="t" style="left:18px;top:344px;color:#111">零件可见性</span>
<span class="t" style="left:110px;top:344px;color:#111">显示原状态</span>
<div class="a" style="left:6px;top:363px;width:202px;height:0;border-top:1px dotted #7a7a7a"></div>
<span class="t" style="left:18px;top:364px;color:#111">可见性/图形替换</span>
<div class="a" style="left:6px;top:383px;width:202px;height:0;border-top:1px dotted #7a7a7a"></div>
<span class="t" style="left:18px;top:384px;color:#111">图形显示选项</span>
<div class="a" style="left:6px;top:403px;width:202px;height:0;border-top:1px dotted #7a7a7a"></div>
<span class="t" style="left:18px;top:404px;color:#111">规程</span>
<span class="t" style="left:110px;top:404px;color:#111">建筑</span>
<div class="a" style="left:108px;top:284px;width:0;height:133px;border-left:1px dotted #7a7a7a"></div>
<div class="a" style="left:208px;top:284px;width:0;height:133px;border-left:1px dotted #7a7a7a"></div>
<div class="a" style="left:108px;top:284px;width:100px;height:19px;box-sizing:border-box;border:1px solid #111;border-width:1px 1px 1px 1px;background:#fff"></div>
<div class="a" style="left:108px;top:302px;width:100px;height:1px;background:#111"></div>
<span class="t" style="left:115px;top:284px;color:#111;word-spacing:2px">1 : 100</span>
<!-- edit buttons -->
<div class="a btn" style="left:109px;top:365px;width:97px;height:18px"></div>
<span class="t" style="left:140px;top:365px;color:#111">编辑...</span>
<div class="a btn" style="left:109px;top:385px;width:97px;height:18px"></div>
<span class="t" style="left:140px;top:385px;color:#111">编辑...</span>
<!-- grid scrollbar -->
<div class="a" style="left:209px;top:264px;width:16px;height:154px;background:linear-gradient(90deg,#e9e9e9,#f3f3f3 60%,#f6f6f6)"></div>
<svg style="left:213.500px;top:271px" width="8" height="4" viewBox="0 0 8 4"><path d="M0 4H8L4 0Z" fill="#505050"/></svg>
<svg style="left:213.500px;top:408px" width="8" height="4" viewBox="0 0 8 4"><path d="M0 0H8L4 4Z" fill="#505050"/></svg>
<div class="a" style="left:209px;top:282px;width:15px;height:23px;box-sizing:border-box;border:1px solid #8e8e8e;border-radius:2px;background:linear-gradient(90deg,#f4f4f4,#e6e6e6 50%,#d4d4d4)"></div>
<div class="a" style="left:213px;top:289px;width:7px;height:1px;background:#777;box-shadow:0 3px 0 #777,0 6px 0 #777"></div>
<!-- help / apply -->
<span class="t" style="left:10px;top:421px;color:#0a62c8;text-decoration:underline">属性帮助</span>
<div class="a" style="left:150px;top:420px;width:73px;height:19px;box-sizing:border-box;border:1px solid #b5b5b5;border-radius:3px;background:#f6f6f6"></div>
<span class="t" style="left:174px;top:421px;color:#9a9a9a">应用</span>
<div class="a" style="left:6px;top:441px;width:226px;height:6px;background:#fbfbfb"></div>
<!--PROPS-->

<!-- project browser -->
<div class="ptitle" style="top:447px;height:18px"></div>
<span class="t" style="left:10px;top:448px;color:#3a3a3a">项目浏览器 - 项目1</span>
<svg style="left:213px;top:453px" width="9" height="8" viewBox="0 0 9 8"><path d="M0.8 0.5 L8.2 7.5 M8.2 0.5 L0.8 7.5" stroke="#111" stroke-width="1.7" fill="none"/></svg>
<div class="a" style="left:6px;top:465px;width:221px;height:3px;background:#fdfdfd"></div>
<div class="a" style="left:6px;top:467px;width:220px;height:1px;background:#bdbdbd"></div>
<div class="a" style="left:6px;top:468px;width:220px;height:1px;background:#6e6e6e"></div>
<div class="a" style="left:6px;top:469px;width:1px;height:41px;background:#8a8a8a"></div>
<div class="a" style="left:7px;top:469px;width:203px;height:41px;background:#fdfdfd"></div>
<div class="a" style="left:47px;top:470px;width:66px;height:18px;background:#e9e9e9"></div>
<span class="t" style="left:50px;top:470px;color:#111">视图 (全部)</span>
<span class="t" style="left:55px;top:489px;color:#111">楼层平面</span>
<!-- tree lines -->
<div class="a" style="left:21px;top:479px;width:7px;height:0;border-top:1px dotted #8a8a8a"></div>
<div class="a" style="left:16px;top:484px;width:0;height:26px;border-left:1px dotted #8a8a8a"></div>
<div class="a" style="left:36px;top:486px;width:0;height:24px;border-left:1px dotted #8a8a8a"></div>
<div class="a" style="left:41px;top:499px;width:12px;height:0;border-top:1px dotted #8a8a8a"></div>
<div class="a" style="left:12px;top:475px;width:9px;height:9px;box-sizing:border-box;border:1px solid #8f9aa8;background:#fff"></div>
<div class="a" style="left:14px;top:479px;width:5px;height:1px;background:#2a4a9a"></div>
<div class="a" style="left:32px;top:495px;width:9px;height:9px;box-sizing:border-box;border:1px solid #8f9aa8;background:#fff"></div>
<div class="a" style="left:34px;top:499px;width:5px;height:1px;background:#2a4a9a"></div>
<div class="a" style="left:36px;top:497px;width:1px;height:5px;background:#2a4a9a"></div>
<svg style="left:29px;top:472px" width="15" height="14" viewBox="0 0 15 14"><path d="M3.5 0.7H0.7V4 M11.5 0.7H14.3V4 M3.5 13.3H0.7V10 M11.5 13.3H14.3V10" stroke="#222" stroke-width="1.3" fill="none"/><path d="M4.5 4.5H9L10.8 3.2V8.5L9 10H4.5Z M9 4.5V10" stroke="#333" stroke-width="1" fill="#f4f4f4"/></svg>
<!-- browser scrollbar -->
<div class="a" style="left:210px;top:469px;width:16px;height:41px;background:linear-gradient(90deg,#ececec,#e6e6e6 40%,#f4f4f4 50%,#f8f8f8)"></div>
<svg style="left:214.500px;top:476px" width="8" height="4" viewBox="0 0 8 4"><path d="M0 4H8L4 0Z" fill="#505050"/></svg>
<div class="a" style="left:210px;top:487px;width:15px;height:15px;box-sizing:border-box;border:1px solid #8e8e8e;border-radius:2px;background:linear-gradient(90deg,#f4f4f4,#e6e6e6 50%,#d4d4d4)"></div>
<!--BROWSER-->

<!-- canvas -->
<div class="a" style="left:227px;top:143px;width:5px;height:368px;background:#f4f4f4"></div>
<div class="a" style="left:231px;top:143px;width:515px;height:367px;background:#7c7c7c"></div>
<div class="a" style="left:232px;top:144px;width:514px;height:366px;background:#3c3c3c"></div>
<div class="a" style="left:233px;top:145px;width:512px;height:346px;background:#000"></div>

<svg style="left:0;top:0" width="773" height="521" viewBox="0 0 773 521">
<g stroke="#f2f2f2" stroke-width="1.150" stroke-linejoin="round" fill="#7b7b7b">
<path d="M391.6 280.4 L469 289.9 L457.9 348.4 L380.6 339.6Z"/>
<path d="M380.6 339.6 L457.9 348.4 L457.3 373.8 L380.6 365.4Z"/>
<path d="M469 289.9 L469 315.3 L457.3 373.8 L457.9 348.4Z"/>
<path d="M515.2 295.2 L592.4 303.8 L582.4 362.5 L505 353.6Z"/>
<path d="M505 353.6 L582.4 362.5 L581.6 388 L505 379.1Z"/>
<path d="M592.4 303.8 L592.4 329.4 L581.6 388 L582.4 362.5Z"/>
</g>
<!-- cursor -->
<path d="M531.5 396.5 V410 L534.6 407.2 L537 413 L539 412.2 L536.7 406.5 H541 Z" fill="#fff" stroke="#111" stroke-width="0.9"/>
<!-- view window controls -->
<rect x="694.300" y="158.800" width="11.600" height="4.200" rx="1" fill="#4a4a4a"/>
<rect x="695.300" y="159.900" width="9.600" height="2" fill="#f2f2f2"/>
<path d="M715 155 V153.300 H722.500 V160.800 H721" stroke="#4a4a4a" stroke-width="2.600" fill="none"/>
<path d="M715 155 V153.300 H722.500 V160.800 H721" stroke="#c8c8c8" stroke-width="1.100" fill="none"/>
<rect x="713.200" y="156.400" width="6.400" height="6.400" stroke="#4a4a4a" stroke-width="3.600" fill="none"/>
<rect x="713.200" y="156.400" width="6.400" height="6.400" stroke="#f2f2f2" stroke-width="1.900" fill="none"/>
<path d="M731.500 155.600 L739.700 162.800 M739.700 155.600 L731.500 162.800" stroke="#4a4a4a" stroke-width="4" fill="none"/>
<path d="M731.500 155.600 L739.700 162.800 M739.700 155.600 L731.500 162.800" stroke="#f2f2f2" stroke-width="2.300" fill="none"/>
<!-- view cube -->
<ellipse cx="701.400" cy="228.600" rx="27" ry="21.200" stroke="#505050" stroke-width="5.800" fill="none" transform="rotate(3 701.400 228.600)"/>
<path d="M691.500 199.100 L714.900 201.100 L711.400 233.800 L687.600 230.300Z" fill="#787878"/>
<path d="M688.100 226.300 L711.800 229.800 L711.400 233.800 L687.600 230.300Z" fill="#636363"/>
<g fill="none" stroke="#5a5a5a" stroke-width="0.900"><path d="M702.500 205 l-2 7 M697 211.500 h12 M706 206 v5.500"/><path d="M693.500 222 v6 h3 v-6 M699 222.500 v6 h3 v-6 M704 223 v6 M692.500 221 h13"/></g>
<g font-size="8" fill="#8c8c8c" letter-spacing="0" font-family="'Liberation Sans','Noto Sans CJK SC',sans-serif">
<text x="670.500" y="225">西</text>
<text x="725.500" y="231.500">东</text>
<text x="693" y="252.800">南</text>
</g>
</svg>
<!--SCENE-->
<div class="a" style="left:233px;top:491px;width:512px;height:18px;background:#fcfcfc"></div>
<div class="a" style="left:745px;top:145px;width:19px;height:364px;background:#f6f6f6"></div>
<span class="t" style="left:254.500px;top:490px;color:#111;letter-spacing:0;word-spacing:3.500px;font-size:11px">1 : 100</span>

<svg style="left:0;top:0" width="773" height="521" viewBox="0 0 773 521">
<!-- detail level -->
<rect x="312.7" y="492.7" width="15" height="10.6" fill="#d9d9d9" stroke="#2c2c2c" stroke-width="1.4"/>
<path d="M314 494h3v2.5h-3z M320 494h3.5v2.5h-3.5z M317 496.5h3v3h-3z M323.500 496.5h3v3h-3z M314 499.5h3v2.500h-3z M320 499.5h3.500v2.500h-3.500z" fill="#6c6c6c"/>
<!-- visual style -->
<path d="M335 497.200 L339 493.700 H348.800 V500.500 L345 504.200 H335Z" fill="#b7d6f5" stroke="#1e78d2" stroke-width="1.300" stroke-linejoin="round"/>
<path d="M335 497.200 H345 V504.200 M345 497.200 L348.800 493.700" fill="none" stroke="#1e78d2" stroke-width="1.200"/>
<!-- sun path off -->
<g stroke="#f0a020" stroke-width="1.200"><path d="M359.500 491.300v2 M359.500 501.500v2 M353.400 497.400h2 M363.600 497.400h2 M355.200 493.100l1.400 1.400 M363.800 493.100l-1.400 1.400 M355.200 501.700l1.400 -1.400"/></g>
<circle cx="359.500" cy="497.400" r="3.200" fill="#fff3c0" stroke="#f0a020" stroke-width="1.200"/>
<path d="M362.3 498.3 l5.5 5.5 M367.8 498.3 l-5.5 5.5" stroke="#e0202a" stroke-width="2.2" fill="none"/>
<!-- shadows off -->
<circle cx="382.500" cy="497" r="4.600" fill="#eaf3fd" stroke="#2b7cd0" stroke-width="1.400"/>
<path d="M377 504.300h8" stroke="#555" stroke-width="1.400"/>
<path d="M384.5 498.5 l5.5 5.5 M390.0 498.5 l-5.5 5.5" stroke="#e0202a" stroke-width="2.2" fill="none"/>
<!-- render (teapot) -->
<path d="M395.500 494.500 l3.500 2.500 v3 q0.500 2.500 3 3 h3.500 q2 -0.500 2.500 -3 v-4 h-9.500" fill="#cfcfcf" stroke="#6e6e6e" stroke-width="1" stroke-linejoin="round"/>
<path d="M400.500 495.300 q2.500 -3.500 5 0" fill="#bdbdbd" stroke="#6e6e6e" stroke-width="0.900"/>
<circle cx="408.200" cy="498.800" r="3" fill="#e4f1ff" stroke="#1f7ad8" stroke-width="1.400"/><rect x="406.900" y="501.800" width="2.600" height="2.600" fill="#3a76b8"/>
<!-- crop view off -->
<path d="M420.400 504.400 V496 H432" fill="none" stroke="#1e78d2" stroke-width="2.200"/>
<path d="M423 504.400 V498.600 H432" fill="none" stroke="#1e78d2" stroke-width="0.900"/>
<path d="M416.300 501.200 h3 M427.300 493.300 v1.500" stroke="#333" stroke-width="1.300"/>
<path d="M421.800 501.300 h3" stroke="#f08080" stroke-width="1"/>
<path d="M425 498.4 l6 6 M431 498.4 l-6 6" stroke="#e0202a" stroke-width="2.200" fill="none"/>
<!-- show crop -->
<path d="M441 504.400 V496 H449" fill="none" stroke="#1e78d2" stroke-width="2.200"/>
<path d="M443.600 504.400 V498.600 H447" fill="none" stroke="#1e78d2" stroke-width="0.900"/>
<path d="M437 501.200 h3 M448 493.300 v1.500" stroke="#333" stroke-width="1.300"/>
<path d="M442.400 501.300 h4" stroke="#e03030" stroke-width="1"/>
<circle cx="450.1" cy="498.2" r="3" fill="#e4f1ff" stroke="#1f7ad8" stroke-width="1.400"/><rect x="448.8" y="501.2" width="2.600" height="2.600" fill="#3a76b8"/>
<!-- unlocked 3D view -->
<path d="M460.200 497.500 L465.500 493 L471.500 497.500 V503.500 H460.200Z" fill="#d8d8d8" stroke="none"/><path d="M459 498 L465.500 492.300 L472.500 497.500 M460.200 497.500 V503.800 H465 M465.500 492.300 L469 491.800" fill="none" stroke="#4a4a4a" stroke-width="1.500"/>
<path d="M462 504.500 v-4.500 h2.500 v4.500" fill="none" stroke="#555" stroke-width="1.100"/>
<rect x="466.300" y="500.300" width="6.400" height="4.500" fill="#7fd0d8" stroke="#2a6a78" stroke-width="1"/>
<path d="M467.700 500 v-1.500 q1.800 -2.200 3.600 0 v1.500" fill="none" stroke="#3a6a94" stroke-width="1.100"/>
<!-- temporary hide (glasses) -->
<path d="M479.300 497.500 q1.200 -2.500 3 -0.800 l2.200 3.500" fill="none" stroke="#3a3a3a" stroke-width="1.300"/>
<ellipse cx="486.700" cy="500.700" rx="2.900" ry="2.300" transform="rotate(-25 486.700 500.700)" fill="#b4d6f2" stroke="#3a3a3a" stroke-width="1.100"/>
<ellipse cx="492" cy="498" rx="2.900" ry="2.300" transform="rotate(-25 492 498)" fill="#b4d6f2" stroke="#3a3a3a" stroke-width="1.100"/>
<path d="M493.500 496 l-3 -2 q-1.200 -0.500 -1.500 0.500" fill="none" stroke="#3a3a3a" stroke-width="1.100"/>
<!-- reveal hidden -->
<circle cx="507.800" cy="497.600" r="3" fill="#eaf4ff" stroke="#1f7ad8" stroke-width="1.400"/><rect x="506.500" y="500.600" width="2.600" height="3.200" fill="#3a76b8"/>
<!-- worksharing display -->
<path d="M522.200 495 h13.500 v9.300 h-13.500z" fill="#f3f3f3" stroke="#222" stroke-width="1.300" stroke-dasharray="2.500 1.200"/>
<path d="M525.500 493.500 v2 M529 493.500 v2 M532.500 493.500 v2 M525.500 503.500 v2 M529 503.500 v2" stroke="#222" stroke-width="1.200"/>
<rect x="530.300" y="498" width="5.500" height="5" fill="#fff" stroke="#333" stroke-width="1"/>
<circle cx="533" cy="500.500" r="1.300" fill="none" stroke="#333" stroke-width="0.900"/>
<!-- analytical model -->
<path d="M542.500 498 L549 492.500 L555.500 496.500 M545 496 V505 M552.500 495 V505" fill="none" stroke="#666" stroke-width="1.200"/>
<path d="M542.500 498.500 V505 M548.500 498 V505 M542.500 501 h6" stroke="#d82020" stroke-width="1.500" fill="none"/>
<circle cx="555" cy="497.500" r="3" fill="#ffd24a" stroke="#f09a18" stroke-width="1.200"/><rect x="553.700" y="500.500" width="2.600" height="3" fill="#8a8a8a"/>
<!-- highlight displacement -->
<path d="M564.500 497.500 L568.500 494 H578 V500.500 L574 504.500 H564.500Z M564.500 497.500 H574 V504.500 M574 497.500 L578 494 M568 499.500 h4 v3" fill="#ddd" stroke="#666" stroke-width="1.200" stroke-linejoin="round"/>
<!-- reveal constraints -->
<path d="M585 490.500 v6 M599.500 490.500 v6 M585 493.500 h14.500 M587.500 492 l-2.500 1.500 l2.500 1.500 M597 492 l2.500 1.500 l-2.500 1.500" fill="none" stroke="#111" stroke-width="1.200"/>
<path d="M585 497 v9" stroke="#333" stroke-width="1.200" stroke-dasharray="1.500 1.500"/>
<path d="M586 505.300 h6" stroke="#333" stroke-width="1.200" stroke-dasharray="1.500 1.500"/>
<rect x="593.300" y="500.300" width="6.800" height="5" fill="#8c8c8c" stroke="#333" stroke-width="1"/>
<path d="M595 500.300 v-1.800 q1.700 -2.200 3.400 0 v1.800" fill="none" stroke="#333" stroke-width="1.200"/>
</svg>
<!-- h scrollbar -->
<div class="a" style="left:603px;top:491px;width:142px;height:18px;background:linear-gradient(#f8f8f8 0,#f8f8f8 1px,#e4e6e6 1px,#e4e6e6 16px,#f8f8f8 16px)"></div>
<svg style="left:610px;top:496px" width="5" height="8" viewBox="0 0 5 8"><path d="M4.500 0.300V7.700L0 4Z" fill="#333"/></svg>
<svg style="left:735px;top:496px" width="5" height="8" viewBox="0 0 5 8"><path d="M0 0.300V7.700L4.500 4Z" fill="#333"/></svg>
<div class="a" style="left:667px;top:492px;width:15px;height:16px;box-sizing:border-box;border:1px solid #8e8e8e;border-radius:2px;background:linear-gradient(#f6f6f6,#ececec 45%,#dadada 55%,#d2d2d2)"></div>
<div class="a" style="left:745px;top:491px;width:19px;height:18px;background:#f0f0f0"></div>
<svg style="left:751px;top:498px" width="9" height="9" viewBox="0 0 9 9"><g fill="#b8b8b8"><rect x="6.400" y="0" width="1.600" height="1.600"/><rect x="3.200" y="3.200" width="1.600" height="1.600"/><rect x="6.400" y="3.200" width="1.600" height="1.600"/><rect x="0" y="6.400" width="1.600" height="1.600"/><rect x="3.200" y="6.400" width="1.600" height="1.600"/><rect x="6.400" y="6.400" width="1.600" height="1.600"/></g></svg>
<!-- v scrollbar -->
<div class="a" style="left:745px;top:145px;width:8px;height:346px;background:#e6e6e6"></div>
<div class="a" style="left:753px;top:145px;width:9px;height:346px;background:#f9f9f9"></div>
<div class="a" style="left:762px;top:145px;width:2px;height:364px;background:#fdfdfd"></div>
<div class="a" style="left:746px;top:311px;width:15px;height:15px;box-sizing:border-box;border:1px solid #8e8e8e;border-radius:2px;background:linear-gradient(90deg,#f8f8f8,#f0f0f0 45%,#dcdcdc 50%,#d6d6d6)"></div>
<!--VCB-->
<!-- view scrollbars -->
<svg style="left:750.500px;top:152px" width="8" height="4" viewBox="0 0 8 4"><path d="M0 4H8L4 0Z" fill="#505050"/></svg>
<svg style="left:750.500px;top:481px" width="8" height="4" viewBox="0 0 8 4"><path d="M0 0H8L4 4Z" fill="#505050"/></svg>
<!--CANVAS-->

<!-- status bar -->
<div class="a" style="left:6px;top:509px;width:758px;height:2px;background:#909090"></div>
<div class="a" style="left:6px;top:511px;width:758px;height:10px;background:#e3e3e3"></div>
<div class="a" style="left:730px;top:511px;width:19px;height:10px;background:#c9c9c9"></div><div class="a" style="left:493px;top:511px;width:26px;height:10px;background:#d9d9d9"></div>
<div class="a" style="left:492px;top:511px;width:1px;height:5px;background:#fafafa"></div><div class="a" style="left:519px;top:511px;width:1px;height:5px;background:#fafafa"></div><div class="a" style="left:728px;top:511px;width:1px;height:6px;background:#fafafa"></div>
<svg style="left:0;top:0" width="773" height="521" viewBox="0 0 773 521"><path d="M502.500 521 v-4.500 h2.200 v-1.200 h3 v1.200 h2.300 v4.500" fill="#eaf6ea" stroke="#1c7a1c" stroke-width="1.300"/><rect x="508" y="519.500" width="3.500" height="1.500" fill="#1a4a8a"/><rect x="738.800" y="516" width="9" height="6" rx="1" fill="#ececec" stroke="#777" stroke-width="1"/></svg>
<div class="a" style="left:7px;top:512px;width:485px;height:9px;overflow:hidden"><span class="t" style="left:0;top:3px;color:#111;letter-spacing:-0.220px">单击可进行选择; 按 Tab 键并单击可选择其他项目; 按 Ctrl 键并单击可将新项目添加到选择集; 按 Shift 键</span></div>
<div class="a" style="left:522px;top:514px;width:205px;height:7px;background:#fff;border:1px solid #b8b8b8;border-bottom:none;box-sizing:border-box"></div>
<div class="a" style="left:6px;top:20px;width:1px;height:501px;background:#9c9c9c"></div>
<!--STATUS-->
</body>
</html>
